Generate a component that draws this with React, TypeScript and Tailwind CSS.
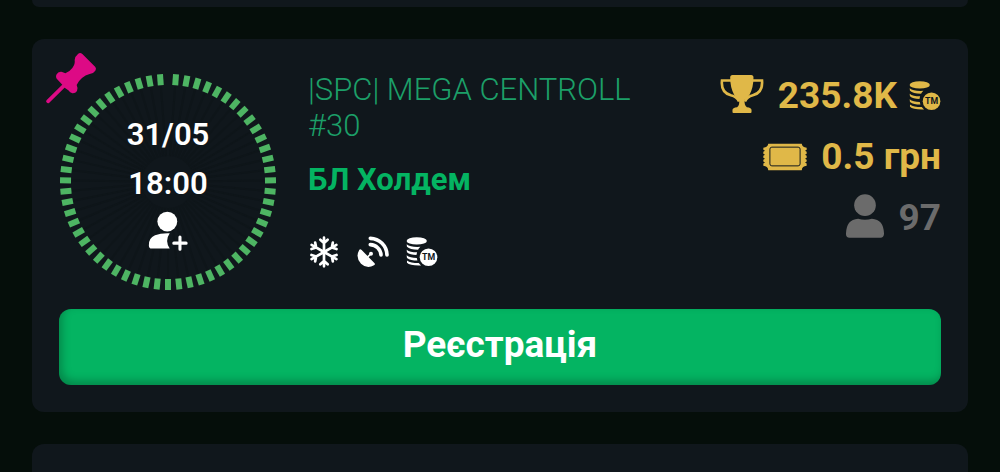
import React from 'react';

const TICKS = Array.from({ length: 59 }, (_, i) => 180 + (i - 29) * 6.06);

const PinIcon = () => (
  <svg viewBox="45 36 156 156" className="h-13 w-13" fill="#dd0a85" aria-hidden="true">
    <path d="M144 42Q150 36 157 42L196 81Q200 86 196 92Q190 101 179 102Q166 105 156 114Q145 123 140 135Q145 145 141 153Q136 161 127 160Q120 158 115 151L104 143L97 134L83 119Q76 113 79 104Q84 94 94 95Q101 97 106 100Q120 94 127 84Q136 73 134 60Q134 50 144 42Z" />
    <path d="M102 137L54 184" stroke="#dd0a85" strokeWidth="11" strokeLinecap="round" />
  </svg>
);

const Ring = () => (
  <svg viewBox="-108 -108 216 216" className="absolute inset-0 h-full w-full" aria-hidden="true">
    {TICKS.map((a) => (
      <g key={a} transform={`rotate(${a})`}>
        <rect x="-1" y="-96" width="2" height="70" fill="#0e1519" />
        <rect x="-3" y="-108" width="6" height="11" fill="#4eb563" />
      </g>
    ))}
  </svg>
);

const UserPlusIcon = () => (
  <svg viewBox="294 154 116 117" className="mt-[3px] h-10 w-10" fill="#fff" aria-hidden="true">
    <circle cx="350" cy="185" r="29" />
    <path d="M357 219Q342 241 357 264H304Q296 264 296 255Q295 233 314 225Q331 218 357 219Z" />
    <path d="M387 230V266M369 248H405" stroke="#fff" strokeWidth="9" strokeLinecap="round" />
  </svg>
);

const SnowflakeIcon = () => (
  <svg viewBox="-48 -48 96 96" className="h-8 w-8" fill="none" stroke="#fff" strokeWidth="8" strokeLinecap="round" strokeLinejoin="round" aria-hidden="true">
    {[0, 60, 120, 180, 240, 300].map((a) => (
      <path key={a} d="M0 0V-43M-11 -37L0 -27L11 -37" transform={`rotate(${a})`} />
    ))}
  </svg>
);

const SatelliteIcon = () => (
  <svg viewBox="168 34 96 96" className="h-8 w-8" fill="#fff" aria-hidden="true">
    <path d="M175 75Q178 72 182 76L220 115Q224 119 219 122Q198 134 180 117Q162 98 175 75Z" />
    <path d="M198 99L210 87" stroke="#fff" strokeWidth="5" />
    <circle cx="210" cy="87" r="6" />
    <path d="M208 60A33 33 0 0 1 240 91M208 41A51 51 0 0 1 258 91" fill="none" stroke="#fff" strokeWidth="11" strokeLinecap="round" />
  </svg>
);

const CoinsIcon = () => (
  <svg viewBox="316 34 98 96" className="h-8 w-8" fill="currentColor" aria-hidden="true">
    <ellipse cx="349" cy="48" rx="31" ry="11" />
    <path d="M318 58Q330 68 360 66Q355 70 353 75Q328 75 319 66ZM318 75Q328 83 350 83L348 91Q328 91 319 83ZM318 92Q328 100 349 100L351 108Q330 108 319 100ZM319 108Q330 116 355 116L362 123Q328 124 319 115Z" />
    <circle cx="385" cy="98" r="27" />
    <text x="385" y="107" textAnchor="middle" className="fill-[#10171c] text-[27px] font-bold">TM</text>
  </svg>
);

const TrophyIcon = () => (
  <svg viewBox="28 41 134 120" className="mb-1 h-10 w-11" fill="currentColor" aria-hidden="true">
    <path d="M66 43H123Q130 43 130 51Q130 82 118 103Q111 114 103 119Q101 134 110 141Q124 142 124 150V156Q124 159 121 159H69Q66 159 66 156V150Q66 142 80 141Q89 134 86 119Q78 114 71 103Q59 82 59 51Q59 43 66 43Z" />
    <path d="M62 60H34Q30 97 61 105Q79 109 86 124M128 60H156Q159 97 128 105Q111 109 104 124" fill="none" stroke="currentColor" strokeWidth="8" />
  </svg>
);

const TicketIcon = () => (
  <svg viewBox="38 34 134 84" className="h-7 w-11" fill="currentColor" aria-hidden="true">
    <path d="M54 36H156Q157 47 171 48V54L166 57L171 60V66L166 69L171 72V78L166 81L171 84V90L166 93L171 96V103Q157 104 156 116H54Q53 104 39 103V96L44 93L39 90V84L44 81L39 78V72L44 69L39 66V60L44 57L39 54V48Q53 47 54 36Z" />
    <rect x="59" y="46" width="92" height="57" rx="6" fill="none" stroke="#10171c" strokeWidth="3" />
  </svg>
);

const UserIcon = () => (
  <svg viewBox="280 191 118 134" className="mb-1 h-11 w-10" fill="currentColor" aria-hidden="true">
    <circle cx="339" cy="225" r="33" />
    <path d="M318 266Q339 273 360 266Q396 268 397 312Q396 324 386 324H292Q281 324 281 312Q282 268 318 266Z" />
  </svg>
);

export default function App() {
  return (
    <main className="flex h-screen flex-col gap-8 overflow-hidden bg-[#050e0a] px-8 font-[Roboto,sans-serif]">
      <div className="h-[7px] shrink-0 rounded-b-xl bg-[#10171c]"></div>

      <article className="relative shrink-0 rounded-xl bg-[#10171c] px-[27px] pt-8 pb-[27px]">
        <div className="absolute top-[13px] left-[13px]">
          <PinIcon />
        </div>

        <div className="flex items-start">
          {/* Start time */}
          <div className="relative mt-[3px] ml-px flex h-54 w-54 shrink-0 flex-col items-center justify-center pb-1">
            <Ring />
            <div className="relative flex flex-col items-center text-[31px] leading-[49px] font-semibold text-white">
              <span>31/05</span>
              <span>18:00</span>
              <UserPlusIcon />
            </div>
          </div>

          {/* Tournament info */}
          <div className="mt-px ml-8 min-w-0 flex-1 pr-10">
            <h2 className="text-[31px] leading-9 font-light text-[#1c9f68]">|SPC| MEGA CENTROLL #30</h2>
            <p className="mt-[18px] text-[31px] leading-9 font-bold text-[#04b462]">БЛ Холдем</p>
            <div className="mt-[38px] flex gap-[17px] text-white">
              <SnowflakeIcon />
              <SatelliteIcon />
              <CoinsIcon />
            </div>
          </div>

          {/* Prize, buy-in, players */}
          <div className="mt-0.5 flex shrink-0 flex-col items-end gap-4 text-[37px] leading-[45px] font-bold text-[#e0b848]">
            <div className="flex h-[45px] items-center gap-3.5">
              <TrophyIcon />
              <div className="flex items-center gap-3">
                <span>235.8K</span>
                <CoinsIcon />
              </div>
            </div>
            <div className="flex h-[45px] items-center gap-3.5">
              <TicketIcon />
              <span>0.5 грн</span>
            </div>
            <div className="flex h-[45px] items-center gap-3.5 text-[#6b6b6b]">
              <UserIcon />
              <span>97</span>
            </div>
          </div>
        </div>

        <button type="button" className="mt-[19px] h-[76px] w-full rounded-xl bg-[#04b462] pb-1 text-[37px] font-bold text-white shadow-[inset_3px_-4px_8px_rgba(0,0,0,0.25)]">
          Реєстрація
        </button>
      </article>

      <div className="min-h-0 flex-1 rounded-t-xl bg-[#10171c]"></div>
    </main>
  );
}
